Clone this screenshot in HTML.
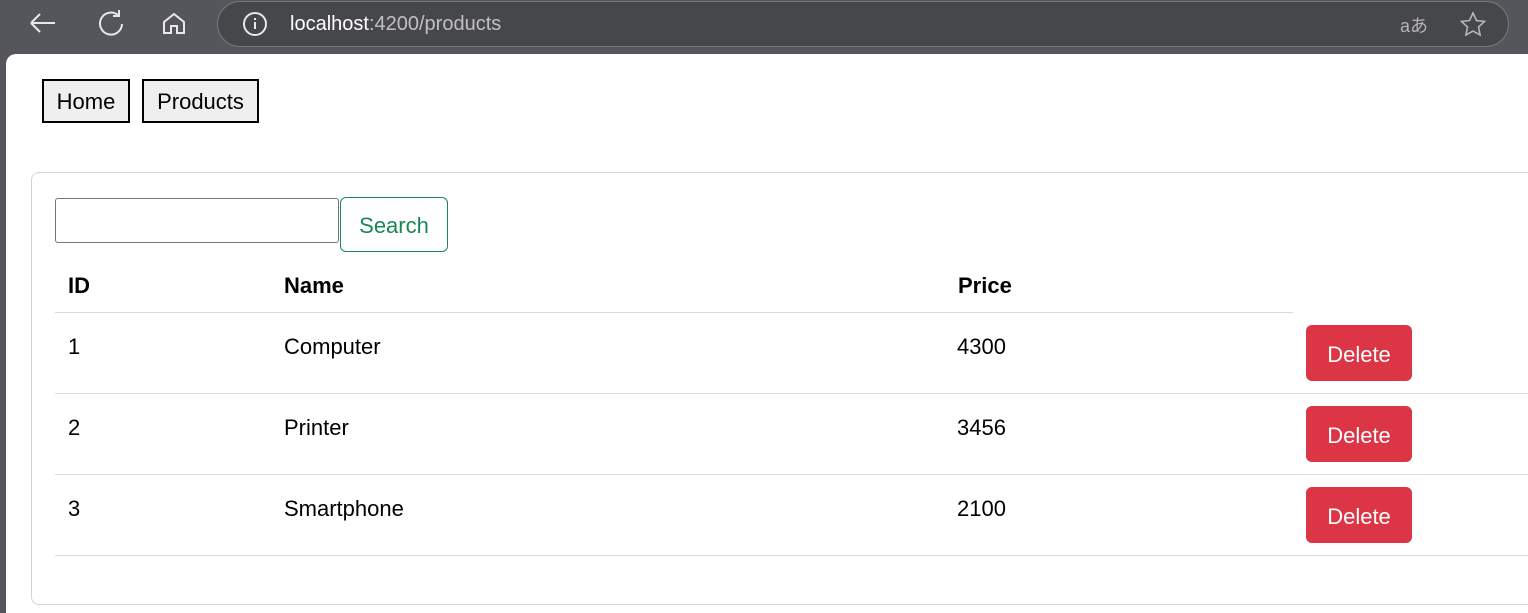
<!DOCTYPE html>
<html><head><style>
body{margin:0;width:1528px;height:613px;overflow:hidden;background:#55565b;font-family:"Liberation Sans",sans-serif;position:relative}
.bar{position:absolute;left:0;top:0;width:1528px;height:54px;background:#55565b}
.url{position:absolute;left:217px;top:1px;width:1290px;height:44px;border:1px solid #77787c;border-radius:24px;background:#46474b}
.page{position:absolute;left:6px;top:54px;width:1522px;height:559px;background:#fff;border-top-left-radius:10px}
.nb{position:absolute;top:79px;height:40px;border:2px solid #000;background:#efefef;font-size:22px;line-height:42px;text-align:center;box-sizing:content-box}
.card{position:absolute;left:31px;top:172px;width:1510px;height:431px;border:1px solid #d3d3d3;border-radius:8px}
.t{position:absolute;font-size:22px;color:#000}
.b{font-weight:bold}
.line{position:absolute;height:1px;background:#dcdcdc}
.del{position:absolute;left:1306px;width:106px;height:56px;background:#dc3545;border-radius:6px;color:#fff;font-size:22px;text-align:center;line-height:59px}
</style></head><body>
<div class="bar"></div>
<svg style="position:absolute;left:0;top:0" width="220" height="50" fill="none" stroke="#e8e8e8" stroke-width="2">
<path d="M31 23h24M31 23l9-9M31 23l9 9"/>
<path d="M119 16a11 11 0 1 0 3 8M119 10v6h-6"/>
<path d="M164 22l10-8 10 8v11h-7v-7h-6v7h-7z"/>
</svg>
<div class="url"></div>
<svg style="position:absolute;left:242px;top:11px" width="26" height="26" fill="none" stroke="#e8e8e8" stroke-width="2"><circle cx="13" cy="13" r="11"/><path d="M13 11v7M13 7v2"/></svg>
<div style="position:absolute;left:290px;top:13px;font-size:20px;color:#fff">localhost<span style="color:#c0c0c3">:4200/products</span></div>
<div style="position:absolute;left:1400px;top:12px;font-size:18px;color:#b5b5b8;font-family:'Liberation Sans','Noto Sans CJK JP',sans-serif">aあ</div>
<svg style="position:absolute;left:1459px;top:11px" width="28" height="28" fill="none" stroke="#b5b5b8" stroke-width="1.6"><path d="M14 2l3.5 7.5 8 1-6 5.5 1.6 8L14 20l-7.1 4 1.6-8-6-5.5 8-1z"/></svg>
<div class="page"></div>
<div class="nb" style="left:42px;width:84px">Home</div>
<div class="nb" style="left:142px;width:113px">Products</div>
<div class="card"></div>
<div style="position:absolute;left:55px;top:198px;width:282px;height:43px;border:1px solid #767676;border-radius:3px"></div>
<div style="position:absolute;left:340px;top:197px;width:106px;height:53px;border:1px solid #198754;border-radius:6px;color:#198754;font-size:22px;text-align:center;line-height:56px">Search</div>
<div class="t b" style="left:68px;top:273px">ID</div>
<div class="t b" style="left:284px;top:273px">Name</div>
<div class="t b" style="left:958px;top:273px">Price</div>
<div class="line" style="left:55px;top:312px;width:1238px"></div>
<div class="t" style="left:68px;top:334px">1</div><div class="t" style="left:284px;top:334px">Computer</div><div class="t" style="left:957px;top:334px">4300</div><div class="del" style="top:325px">Delete</div>
<div class="line" style="left:55px;top:393px;width:1473px"></div>
<div class="t" style="left:68px;top:415px">2</div><div class="t" style="left:284px;top:415px">Printer</div><div class="t" style="left:957px;top:415px">3456</div><div class="del" style="top:406px">Delete</div>
<div class="line" style="left:55px;top:474px;width:1473px"></div>
<div class="t" style="left:68px;top:496px">3</div><div class="t" style="left:284px;top:496px">Smartphone</div><div class="t" style="left:957px;top:496px">2100</div><div class="del" style="top:487px">Delete</div>
<div class="line" style="left:55px;top:555px;width:1473px"></div>
</body></html>
